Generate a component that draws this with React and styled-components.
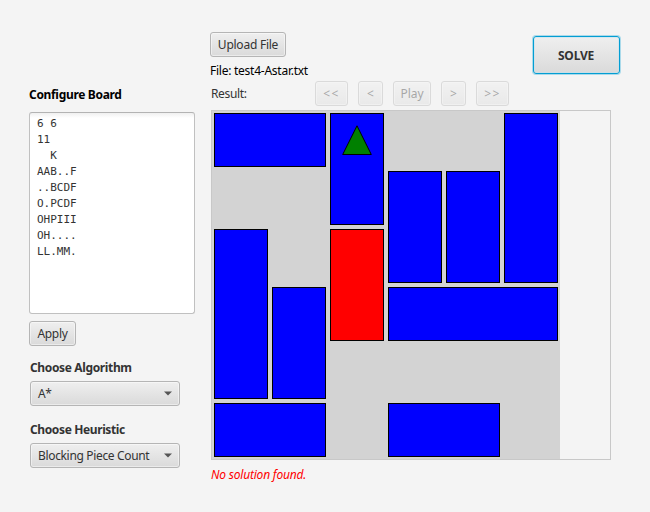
import React from "react";
import styled, { createGlobalStyle } from "styled-components";

const GlobalStyle = createGlobalStyle`
  * { box-sizing: border-box; }
  body {
    margin: 0;
    background: #f4f4f4;
    color: #333;
    font: 12px/16px "Noto Sans", "Open Sans", sans-serif;
  }
`;

const Window = styled.main`
  width: 650px;
  height: 512px;
  display: grid;
  grid-template-columns: 181px 1fr;
  padding: 32px 29px 0;
  background: #f4f4f4;
  overflow: hidden;
`;

const Sidebar = styled.aside`
  display: flex;
  flex-direction: column;
  align-items: flex-start;
  padding-top: 55px;
`;

const Content = styled.section`
  display: flex;
  flex-direction: column;
  align-items: flex-start;
`;

const Text = styled.span`
  display: inline-block;
  height: 16px;
  white-space: pre;
  font-weight: ${(p) => (p.$bold ? 700 : 400)};
  letter-spacing: ${(p) => p.$track || 0}px;
  color: ${(p) => p.$color || "#333"};
`;

const ConfigArea = styled.textarea`
  display: block;
  width: 166px;
  height: 202px;
  margin: 9px 0 7px;
  padding: 3px 7px;
  border: 1px solid #c0c0c0;
  border-top-color: #b3b3b3;
  border-radius: 3px;
  outline: none;
  resize: none;
  overflow: hidden;
  background: linear-gradient(#f0f0f0, #fff 5px);
  color: #333;
  font: 11px/16px "DejaVu Sans Mono", monospace;
`;

const Button = styled.button`
  display: flex;
  align-items: center;
  justify-content: center;
  flex: none;
  width: ${(p) => p.$width}px;
  height: 25px;
  padding: 0;
  border: 1px solid #b5b5b5;
  border-radius: 3px;
  background: linear-gradient(#efefef, #dadada);
  box-shadow: inset 0 0 0 1px rgba(255, 255, 255, 0.45);
  font: inherit;

  &:disabled { opacity: 0.4; }
`;

const SolveButton = styled(Button)`
  height: 38px;
  padding: 2px 1px 0 0;
  border-color: #039ed3;
  box-shadow: 0 0 0 1px rgba(3, 158, 211, 0.3), inset 0 0 0 1px rgba(190, 225, 240, 0.5);
`;

const Field = styled.div`
  display: flex;
  flex-direction: column;
  margin: ${(p) => p.$gap}px 0 0 1px;
`;

const ComboBox = styled(Button).attrs({ $width: 150 })`
  justify-content: space-between;
  margin-top: 5px;
  padding: 0 7px;
`;

const Header = styled.div`
  display: flex;
  justify-content: space-between;
  width: 410px;
  height: 49px;
`;

const FileColumn = styled.div`
  display: flex;
  flex-direction: column;
  gap: 6px;
`;

const SolveSlot = styled.div`
  padding-top: 4px;
`;

const ResultBar = styled.div`
  display: flex;
  gap: 10px;
  align-items: center;
`;

const ResultLabel = styled.div`
  width: 95px;
  padding-left: 1px;
`;

const BoardPane = styled.div`
  width: 400px;
  height: 350px;
  margin: 4px 0 0 1px;
  border: 1px solid #c8c8c8;
`;

const Board = styled.div`
  display: grid;
  grid-template: repeat(6, 58px) / repeat(6, 58px);
  width: 348px;
  height: 348px;
  background: #d3d3d3;
`;

const Piece = styled.div`
  grid-area: ${(p) => `${p.$row} / ${p.$col} / span ${p.$rows} / span ${p.$cols}`};
  display: flex;
  justify-content: center;
  margin: 2px;
  border: 1px solid #000;
  background: ${(p) => p.$fill || "#00f"};
`;

const ExitMarker = styled.svg`
  display: block;
  width: 32px;
  height: 32px;
  margin-top: 10px;
`;

const Status = styled.div`
  margin: 7px 0 0 1px;
  font-style: italic;
`;

const PIECES = [
  { id: "A", row: 1, col: 1, rows: 1, cols: 2 },
  { id: "B", row: 1, col: 3, rows: 2, cols: 1, exit: true },
  { id: "C", row: 2, col: 4, rows: 2, cols: 1 },
  { id: "D", row: 2, col: 5, rows: 2, cols: 1 },
  { id: "F", row: 1, col: 6, rows: 3, cols: 1 },
  { id: "O", row: 3, col: 1, rows: 3, cols: 1 },
  { id: "P", row: 3, col: 3, rows: 2, cols: 1, fill: "#f00" },
  { id: "H", row: 4, col: 2, rows: 2, cols: 1 },
  { id: "I", row: 4, col: 4, rows: 1, cols: 3 },
  { id: "L", row: 6, col: 1, rows: 1, cols: 2 },
  { id: "M", row: 6, col: 4, rows: 1, cols: 2 },
];

const CONTROLS = [
  { label: "<<", width: 33, track: 1.5 },
  { label: "<", width: 25 },
  { label: "Play", width: 38, track: -0.1 },
  { label: ">", width: 25 },
  { label: ">>", width: 33, track: 1.5 },
];

const CONFIG = "6 6\n11\n  K\nAAB..F\n..BCDF\nO.PCDF\nOHPIII\nOH....\nLL.MM.";

function Arrow() {
  return (
    <svg width="8" height="5" viewBox="0 0 8 5">
      <path d="M0 .5h8L4 4.5z" fill="#555" />
    </svg>
  );
}

function Choice({ title, titleTrack, value, valueTrack, gap }) {
  return (
    <Field $gap={gap}>
      <Text $bold $track={titleTrack}>{title}</Text>
      <ComboBox>
        <Text $track={valueTrack}>{value}</Text>
        <Arrow />
      </ComboBox>
    </Field>
  );
}

export default function App() {
  return (
    <>
      <GlobalStyle />
      <Window>
        <Sidebar>
          <Text $bold $track={-0.32} $color="#000">Configure Board</Text>
          <ConfigArea defaultValue={CONFIG} spellCheck={false} />
          <Button $width={47}><Text $track={-0.3}>Apply</Text></Button>
          <Choice title="Choose Algorithm" titleTrack={-0.36} value="A*" valueTrack={-0.4} gap={14} />
          <Choice title="Choose Heuristic" titleTrack={-0.38} value="Blocking Piece Count" valueTrack={-0.34} gap={16} />
        </Sidebar>
        <Content>
          <Header>
            <FileColumn>
              <Button $width={76}><Text $track={-0.24}>Upload File</Text></Button>
              <Text $track={-0.25} $color="#000">File: test4-Astar.txt</Text>
            </FileColumn>
            <SolveSlot>
              <SolveButton $width={87}><Text $bold $track={-0.2}>SOLVE</Text></SolveButton>
            </SolveSlot>
          </Header>
          <ResultBar>
            <ResultLabel><Text $track={-0.35}>Result:</Text></ResultLabel>
            {CONTROLS.map((c) => (
              <Button key={c.label} $width={c.width} disabled>
                <Text $track={c.track}>{c.label}</Text>
              </Button>
            ))}
          </ResultBar>
          <BoardPane>
            <Board>
              {PIECES.map((p) => (
                <Piece key={p.id} $row={p.row} $col={p.col} $rows={p.rows} $cols={p.cols} $fill={p.fill}>
                  {p.exit && (
                    <ExitMarker viewBox="0 0 32 32">
                      <path d="M16 1.8L30.3 30.5H1.7z" fill="green" stroke="#000" />
                    </ExitMarker>
                  )}
                </Piece>
              ))}
            </Board>
          </BoardPane>
          <Status><Text $track={-0.2} $color="#f00">No solution found.</Text></Status>
        </Content>
      </Window>
    </>
  );
}
